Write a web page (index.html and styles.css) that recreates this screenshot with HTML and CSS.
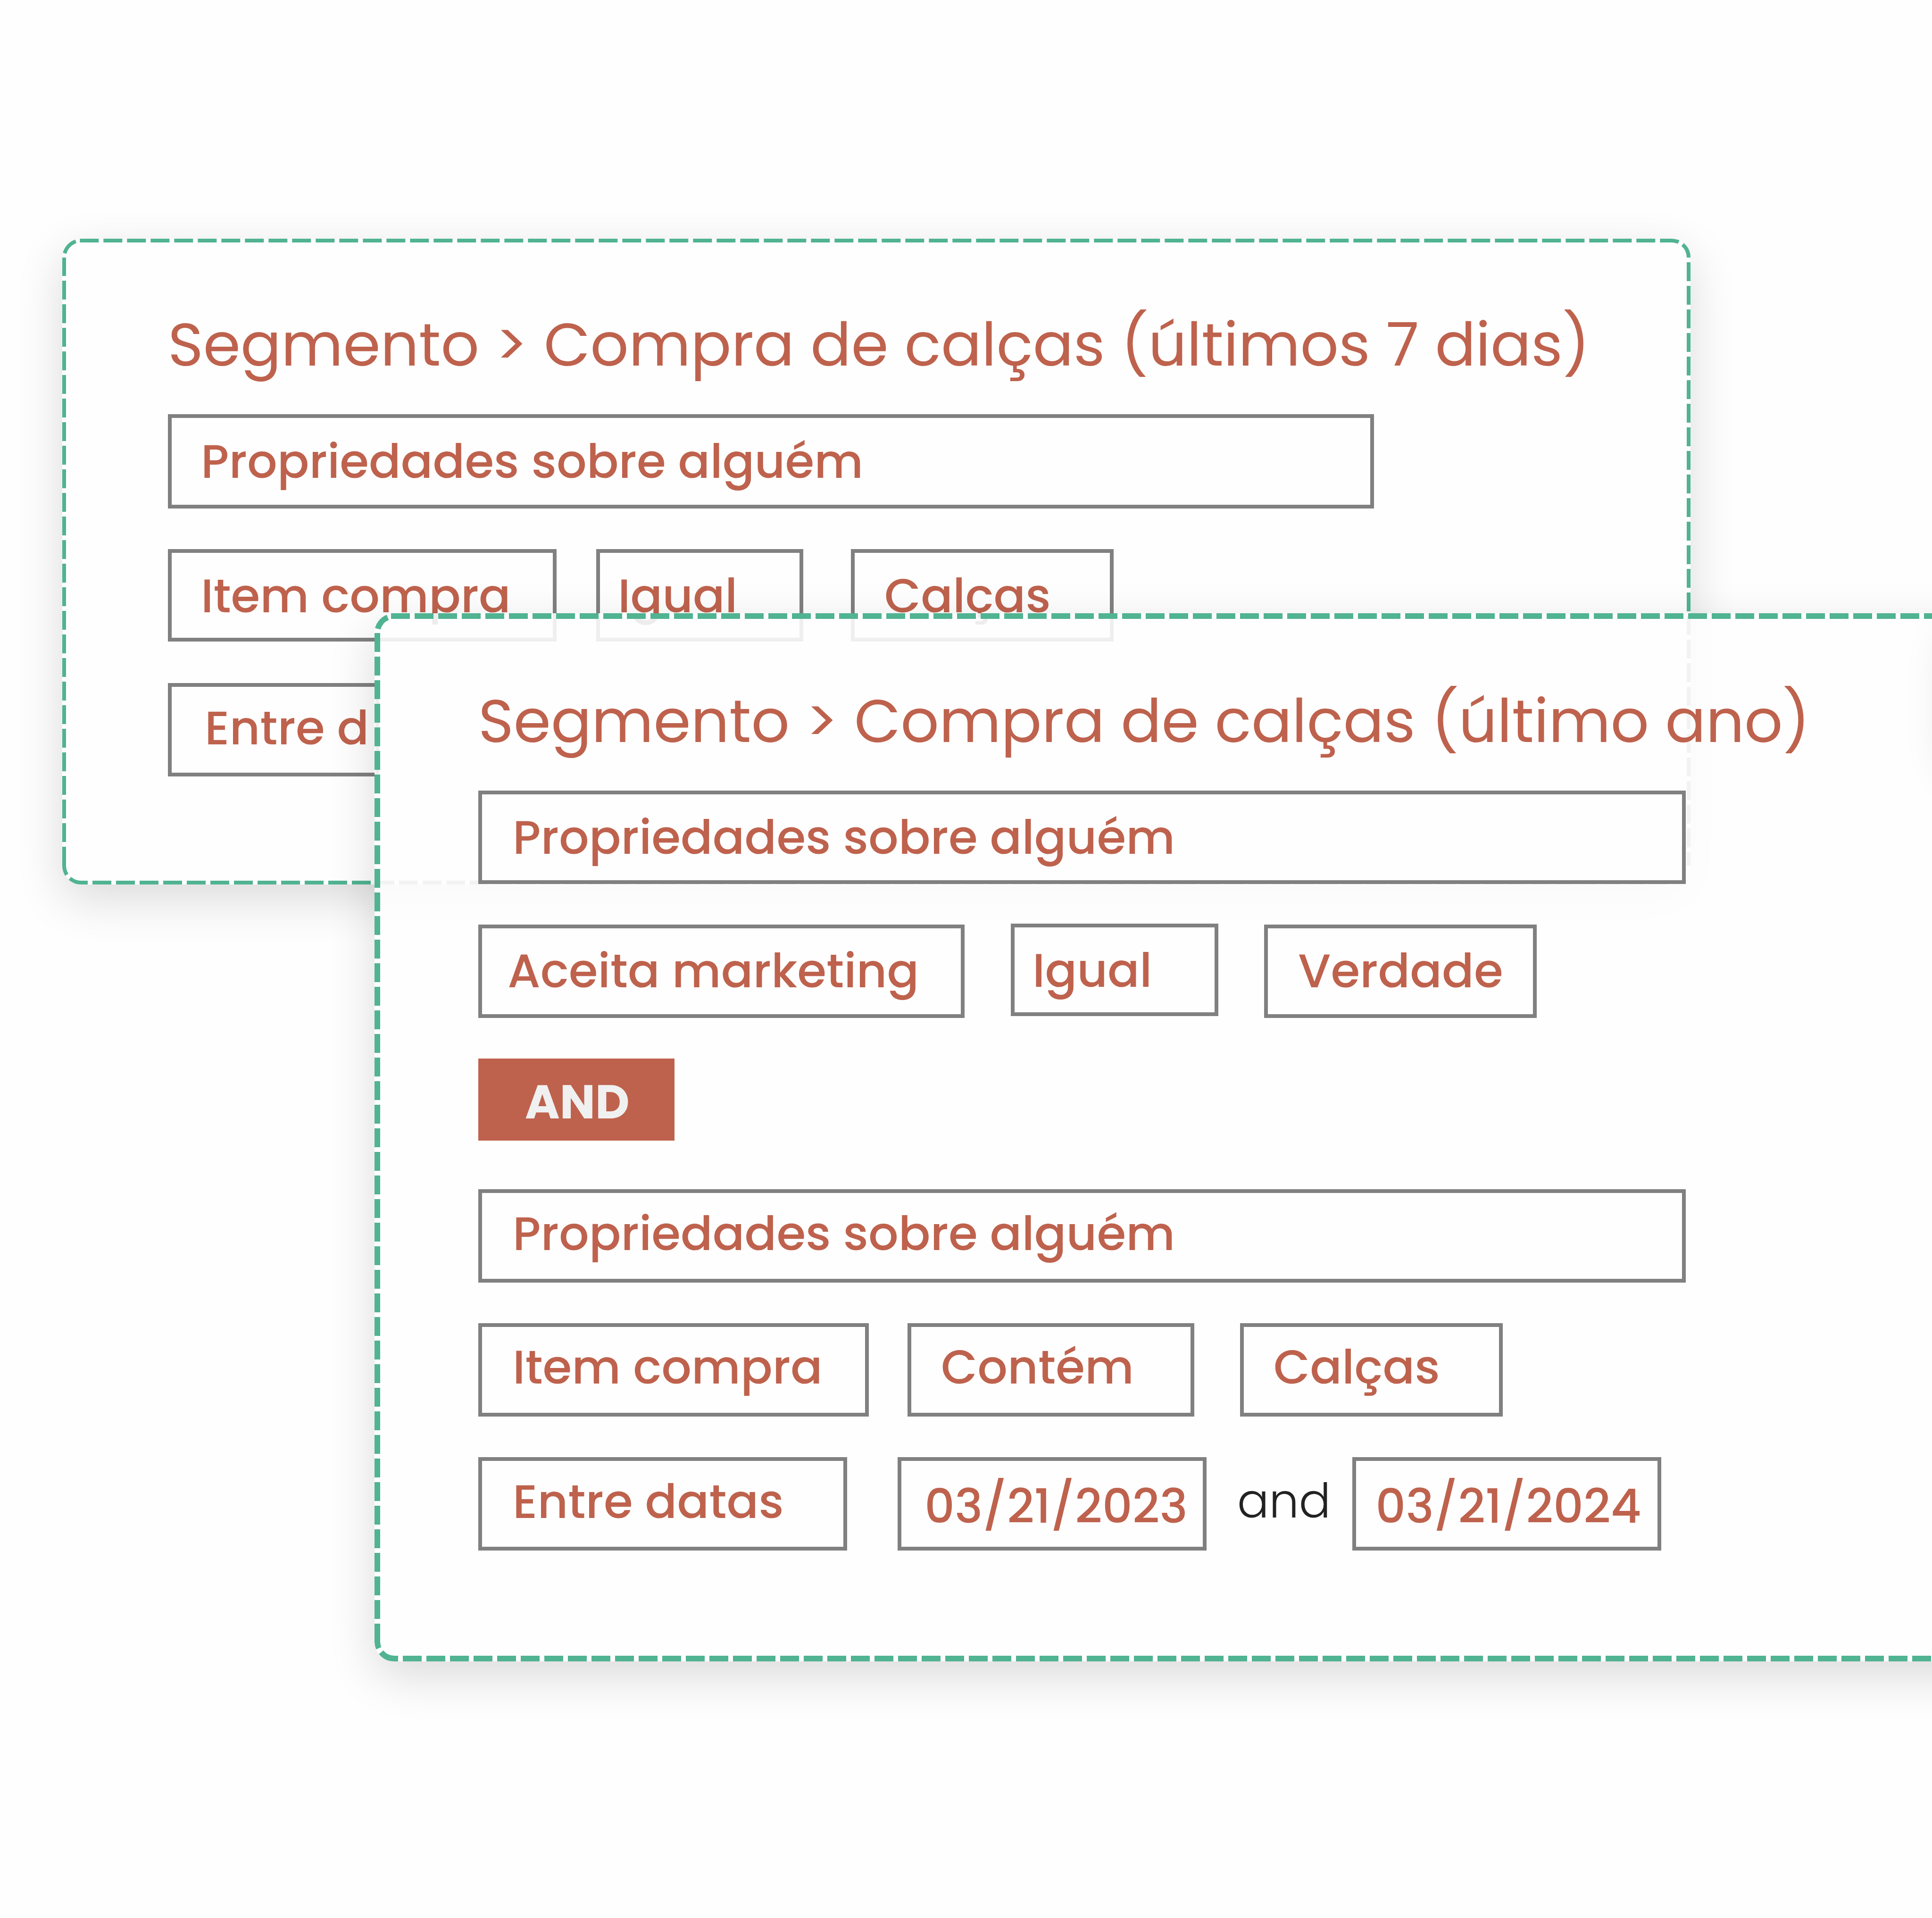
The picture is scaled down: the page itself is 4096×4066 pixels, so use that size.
FILE: index.html
```html
<!DOCTYPE html>
<html lang="pt">
<head>
  <meta charset="UTF-8">
  <meta name="viewport" content="width=device-width, initial-scale=1.0">
  <title>Segmentos</title>
  <link rel="stylesheet" href="styles.css">
</head>
<body>
  <section class="card card-back">
    <svg class="outline" viewBox="0 0 3452 1369">
      <path d="M37.3 4 H3412 a36 36 0 0 1 36 36"/>
      <path d="M3448 50 V1329"/>
      <path d="M3404 1365 H40 a36 36 0 0 1 -36 -36"/>
      <path d="M4 1329 V40"/>
      <path class="solid" d="M5.1 31 A36 36 0 0 1 28.8 5.8"/>
    </svg>
    <h2>Segmento &gt; Compra de calças (últimos 7 dias)</h2>
    <div class="row">
      <div class="field wide">Propriedades sobre alguém</div>
    </div>
    <div class="row row-item">
      <div class="field item">Item compra</div>
      <div class="field equal">Igual</div>
      <div class="field pants">Calças</div>
    </div>
    <div class="row row-between">
      <div class="field between">Entre d</div>
    </div>
  </section>

  <section class="card card-front">
    <svg class="outline" viewBox="0 0 3500 2222">
      <path d="M35 6 H3500"/>
      <path d="M6 2182 V42"/>
      <path d="M3500 2216 H42 a36 36 0 0 1 -36 -36"/>
      <path class="solid" d="M7 33 A36 36 0 0 1 28 8.7"/>
    </svg>
    <h2>Segmento &gt; Compra de calças (último ano)</h2>
    <div class="row">
      <div class="field wide">Propriedades sobre alguém</div>
    </div>
    <div class="row row-accept">
      <div class="field accept">Aceita marketing</div>
      <div class="field equal">Igual</div>
      <div class="field truth">Verdade</div>
    </div>
    <div class="operator">AND</div>
    <div class="row row-second">
      <div class="field wide">Propriedades sobre alguém</div>
    </div>
    <div class="row row-item">
      <div class="field item">Item compra</div>
      <div class="field contains">Contém</div>
      <div class="field pants">Calças</div>
    </div>
    <div class="row row-between">
      <div class="field between">Entre datas</div>
      <div class="field date">03/21/2023</div>
      <span class="and">and</span>
      <div class="field date date-end">03/21/2024</div>
    </div>
  </section>

  <div class="side-shadow"></div>
</body>
</html>
```
FILE: styles.css
```css
* {
  box-sizing: border-box;
}
body {
  margin: 0;
  height: 4066px;
  position: relative;
  overflow: hidden;
  background-color: #fefefe;
  font-family: Poppins, Inter, sans-serif;
  color: #be624d;
}
.card {
  position: absolute;
  border-radius: 42px;
  box-shadow: 0 32px 100px rgba(0, 0, 0, 0.14);
}
.card-back {
  left: 132px;
  top: 506px;
  width: 3452px;
  height: 1369px;
  padding: 145px 224px 0;
  background-color: #fefefe;
}
/* runs off the right edge of the page */
.card-front {
  left: 794px;
  top: 1300px;
  width: 3500px;
  height: 2222px;
  padding: 149px 220px 0;
  background-color: rgba(254, 254, 254, 0.88);
  backdrop-filter: grayscale(1);
}
.outline {
  position: absolute;
  left: 0;
  top: 0;
  width: 100%;
  height: 100%;
  fill: none;
  stroke: #50b391;
  stroke-width: 8;
  stroke-dasharray: 40 10;
}
.card-front .outline {
  stroke-width: 12;
}
.outline .solid {
  stroke-dasharray: none;
}
h2 {
  margin: 0 0 67px;
  height: 160px;
  line-height: 160px;
  font-size: 127.5px;
  font-weight: 400;
  white-space: nowrap;
}
.row {
  display: flex;
}
.field {
  flex-shrink: 0;
  height: 198px;
  border: 8px solid #808080;
  padding-left: 65px;
  line-height: 171px;
  font-size: 100px;
  font-weight: 500;
  white-space: nowrap;
}
.wide {
  width: 2560px;
  line-height: 182px;
}
.item {
  width: 828px;
}
.equal {
  width: 440px;
  margin-left: 98px;
  padding-left: 38px;
}
.pants {
  width: 557px;
  margin-left: 97px;
  padding-left: 63px;
}
.between {
  width: 782px;
  line-height: 173px;
}

.card-back .wide {
  width: 2557px;
  height: 200px;
  padding-left: 62px;
  line-height: 185px;
}
.card-back .row-item {
  margin-top: 86px;
}
.card-back .row-item .field {
  height: 196px;
  line-height: 183px;
}
.card-back .item {
  width: 824px;
  padding-left: 62px;
}
.card-back .equal {
  width: 439px;
  margin-left: 84px;
}
.card-back .pants {
  margin-left: 101px;
}
.card-back .row-between {
  margin-top: 88px;
}
.card-back .between {
  width: 448px;
  padding-left: 70px;
  line-height: 174px;
}

.row-accept {
  margin-top: 86px;
}
.row-accept .field {
  line-height: 180px;
}
.row-accept .equal {
  height: 196px;
  margin-top: -2px;
  line-height: 182px;
}
.accept {
  width: 1031px;
  padding-left: 54px;
}
.truth {
  width: 578px;
  margin-left: 97px;
  padding-left: 64px;
}
.operator {
  width: 416px;
  height: 174px;
  margin-top: 86px;
  padding-left: 99px;
  line-height: 184px;
  background-color: #be624d;
  color: #f0f0f0;
  font-size: 100px;
  font-weight: 700;
}
.row-second {
  margin-top: 103px;
}
.row-second .wide {
  line-height: 172px;
}
.row-item {
  margin-top: 86px;
}
.contains {
  width: 608px;
  margin-left: 82px;
  padding-left: 63px;
}
.row-between {
  margin-top: 86px;
}
.date {
  width: 655px;
  margin-left: 107px;
  padding-left: 49px;
  line-height: 193px;
}
.and {
  margin-left: 65px;
  line-height: 187px;
  color: #222;
  font-size: 100px;
  font-weight: 300;
}
.date-end {
  margin-left: 46px;
  padding-left: 41px;
}
/* shadow of the panel that sits past the right edge */
.side-shadow {
  position: absolute;
  left: 4130px;
  top: 1315px;
  width: 200px;
  height: 290px;
  box-shadow: 0 30px 90px rgba(0, 0, 0, 0.13);
}
```
